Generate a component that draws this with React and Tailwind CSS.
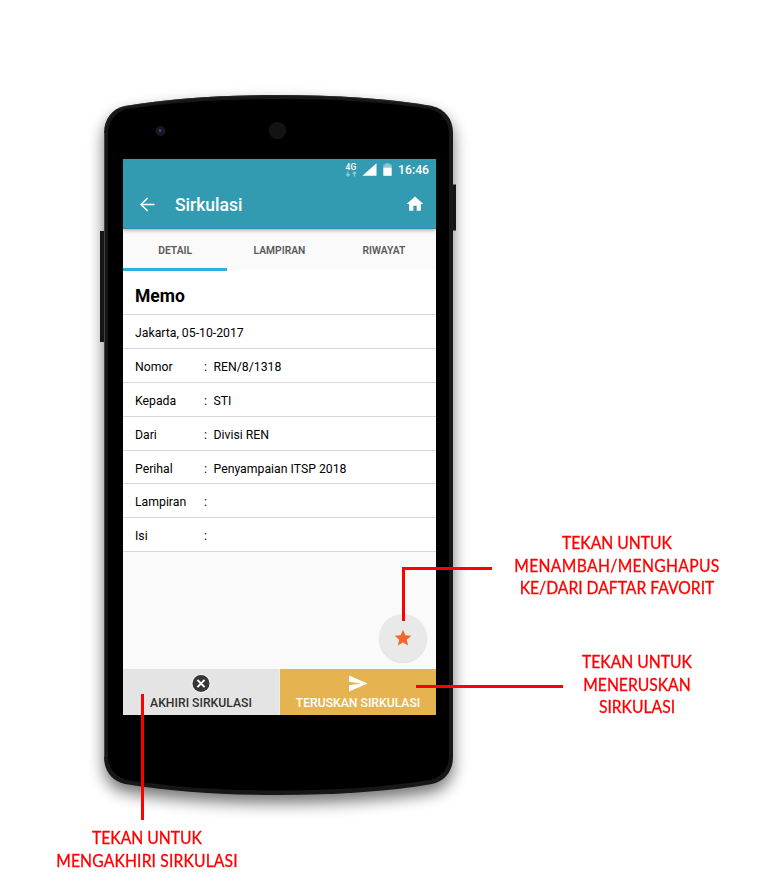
const rows = [
  ["Nomor", "REN/8/1318"],
  ["Kepada", "STI"],
  ["Dari", "Divisi REN"],
  ["Perihal", "Penyampaian ITSP 2018"],
  ["Lampiran", ""],
  ["Isi", ""],
];

const BODY =
  "M104 133 C104 119 112 109 125 106 C170 98.500 220 95 278.500 95 C337 95 387 98.500 432 106 C445 109 453 119 453 133 V757 C453 771 445 781 432 784 C387 791.500 337 795 278.500 795 C220 795 170 791.500 125 784 C112 781 104 771 104 757 Z";
const FACE =
  "M108 134 C108 122 115 112 127 109 C172 102 221 99 278.500 99 C336 99 385 102 430 109 C442 112 449 122 449 134 V756 C449 768 442 777 430 780 C385 787 336 790.500 278.500 790.500 C221 790.500 172 787 127 780 C115 777 108 768 108 756 Z";

function PhoneBody() {
  return (
    <svg className="absolute inset-0" width="774" height="889" viewBox="0 0 774 889">
      <defs>
        <filter id="soft" x="-20%" y="-20%" width="140%" height="140%">
          <feGaussianBlur stdDeviation="8" />
        </filter>
      </defs>
      <path d={BODY} fill="#000" opacity=".55" filter="url(#soft)" transform="translate(0 8)" />
      <rect x="100" y="231" width="6" height="111" fill="#151515" />
      <rect x="451" y="184.500" width="5" height="46" fill="#151515" />
      <path d={BODY} fill="#171717" />
      <path d="M104.500 133 V757" stroke="#444" />
      <path d="M106 126 C108 115 115 108 125 106.500 C170 99 220 95.500 278.500 95.500 C337 95.500 387 99 432 106.500" fill="none" stroke="#2a2a2a" strokeWidth=".8" />
      <path d={FACE} fill="#000" />
      <circle cx="160.500" cy="131" r="5" fill="#191919" />
      <circle cx="160.500" cy="131" r="2.300" fill="#171743" />
      <circle cx="160" cy="130.400" r="1" fill="#66669c" />
      <circle cx="277.500" cy="130.500" r="8.800" fill="#131313" />
    </svg>
  );
}

function StatusBar() {
  return (
    <div className="flex h-[22px] items-center pr-[7px] text-white">
      <div className="ml-auto flex items-center">
        <div className="mr-[5px] flex w-3 flex-col items-center">
          <span className="h-[8px] text-[8.500px] font-medium leading-[8px] tracking-[0.3px]">4G</span>
          <svg width="12" height="6" viewBox="0 0 12 6" fill="none" stroke="#8cc8d4" strokeWidth="1.300">
            <path d="M3 .5V5M1.200 3.200L3 5L4.800 3.200M9.500 5.500V1M7.700 2.800L9.500 1L11.300 2.800" />
          </svg>
        </div>
        <svg className="mr-[6px]" width="15" height="14" viewBox="0 0 15 14">
          <path d="M.5 12.800L14.500 .2V12.800Z" fill="#fff" />
        </svg>
        <svg className="mr-[6px]" width="9" height="14" viewBox="0 0 9 14">
          <path d="M2.500 .2H6.500V1.500H8.700V4.500H.3V1.500H2.500Z" fill="#8cc8d4" />
          <path d="M.3 4.500H8.700V12.800H.3Z" fill="#fff" />
        </svg>
        <span className="text-[12.200px] font-medium">16:46</span>
      </div>
    </div>
  );
}

function Header() {
  return (
    <header className="relative z-10 h-[70px] shrink-0 border-b border-[#2590a8] bg-[#339bb1] shadow-[0_1px_4px_rgba(90,50,40,0.5)]">
      <StatusBar />
      <div className="flex h-[47px] items-center pl-[14px] pr-[11px] text-white">
        <svg width="22" height="20" viewBox="0 0 22 20" fill="none" stroke="#fff" strokeWidth="1.600">
          <path d="M17.500 9.500H4.700M10.700 3L4.200 9.500L10.700 16" />
        </svg>
        <h1 className="ml-[16px] pt-px text-[17.500px] font-medium leading-6">Sirkulasi</h1>
        <svg className="-mt-[2px] ml-auto" width="20" height="20" viewBox="0 0 24 24" fill="#fff">
          <path d="M10 20v-6h4v6h5v-8h3L12 3 2 12h3v8z" />
        </svg>
      </div>
    </header>
  );
}

function Screen() {
  return (
    <main className="relative flex h-[556px] w-[313px] flex-col bg-[#fafafa] text-black">
      <Header />
      <nav className="grid h-[41px] shrink-0 grid-cols-3 text-center text-[10.300px] font-semibold leading-[43px] text-[#595959]">
        <span className="z-10 h-[42px] shadow-[inset_0_-3px_0_#2eaee4]">DETAIL</span>
        <span>LAMPIRAN</span>
        <span>RIWAYAT</span>
      </nav>
      <section className="bg-white text-[12.250px]">
        <h2 className="h-[45px] border-b border-[#d8d8d8] pl-[12px] text-[17.500px] font-bold leading-[52px]">Memo</h2>
        <p className="h-[33.900px] border-b border-[#d8d8d8] pl-[12px] leading-[36px]">Jakarta, 05-10-2017</p>
        {rows.map(([label, value]) => (
          <div key={label} className="flex h-[33.900px] border-b border-[#d8d8d8] pl-[12px] leading-[36.500px]">
            <span className="w-[69px]">{label}</span>
            <span className="w-[9.500px]">:</span>
            <span>{value}</span>
          </div>
        ))}
      </section>
      <button className="absolute bottom-[53px] right-[9px] flex size-12 items-center justify-center rounded-full bg-[#e9e9e9] shadow-[0_1px_1px_rgba(0,0,0,0.12)]">
        <svg width="20" height="20" viewBox="0 0 24 24" fill="#f4652e">
          <path d="M12 17.270L18.180 21l-1.640-7.030L22 9.240l-7.190-.61L12 2 9.190 8.630 2 9.240l5.460 4.730L5.820 21z" />
        </svg>
      </button>
      <footer className="mt-auto grid h-[46px] grid-cols-2 gap-px bg-[#e4edf5] text-[12.200px] font-medium">
        <button className="flex flex-col items-center bg-[#e4e4e4] pt-[4px] text-[#303030]">
          <svg width="22" height="21" viewBox="0 0 22 21">
            <circle cx="11" cy="10.500" r="9.500" fill="#f3f3f3" />
            <circle cx="11" cy="10.500" r="8.500" fill="#363636" />
            <path d="M7.400 6.900L14.600 14.100M14.600 6.900L7.400 14.100" stroke="#fff" strokeWidth="2" />
          </svg>
          <span className="leading-[18px]">AKHIRI SIRKULASI</span>
        </button>
        <button className="flex flex-col items-center bg-[#e5b451] pt-[4px] text-white">
          <svg width="22" height="21" viewBox="0 0 22 21" fill="#fff">
            <path d="M2 2.500L20.500 10.500L2 18.500V12.300L14 10.500L2 8.700Z" />
          </svg>
          <span className="leading-[18px]">TERUSKAN SIRKULASI</span>
        </button>
      </footer>
    </main>
  );
}

export default function App() {
  return (
    <div className="relative h-[889px] w-[774px] overflow-hidden bg-white font-['Roboto',sans-serif]">
      <PhoneBody />
      <div className="pl-[123px] pt-[159px]">
        <Screen />
      </div>
      <svg className="absolute inset-0" width="774" height="889" viewBox="0 0 774 889" fill="none" stroke="#f00" strokeWidth="3">
        <path d="M403.500 621V568.500H492M416 686.500H563M142.500 694V820" />
      </svg>
      <div className="absolute left-[492px] top-[532px] w-[250px] scale-x-[0.95] text-center font-['Lato',sans-serif] text-[16.500px] leading-[22.500px] text-[#f00] [-webkit-text-stroke:0.3px_#f00]">
        TEKAN UNTUK<br /><span className="tracking-[0.350px]">MENAMBAH/MENGHAPUS</span><br />KE/DARI DAFTAR FAVORIT
      </div>
      <div className="absolute left-[562px] top-[651px] w-[150px] scale-x-[0.95] text-center font-['Lato',sans-serif] text-[16.500px] leading-[22.500px] text-[#f00] [-webkit-text-stroke:0.3px_#f00]">
        TEKAN UNTUK<br />MENERUSKAN<br />SIRKULASI
      </div>
      <div className="absolute left-[22px] top-[827px] w-[250px] scale-x-[0.95] text-center font-['Lato',sans-serif] text-[16.500px] leading-[22.500px] text-[#f00] [-webkit-text-stroke:0.3px_#f00]">
        TEKAN UNTUK<br /><span className="tracking-[0.150px]">MENGAKHIRI SIRKULASI</span>
      </div>
    </div>
  );
}
